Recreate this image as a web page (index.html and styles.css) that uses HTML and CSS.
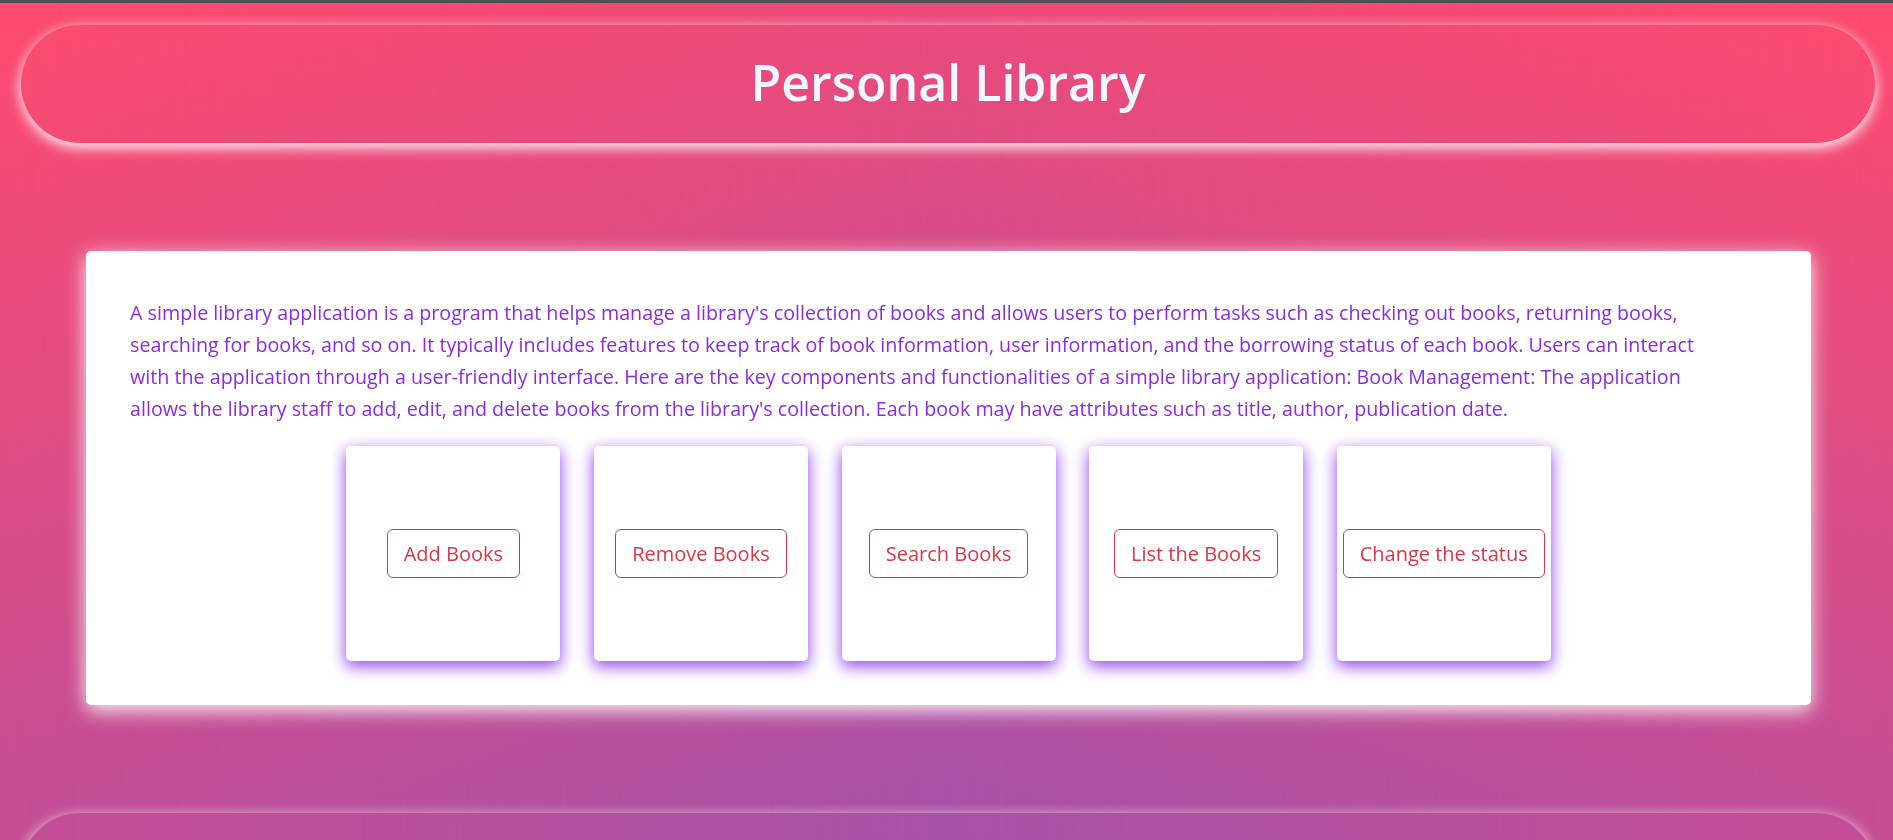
FILE: index.html
```html
<!DOCTYPE html>
<html lang="en">
<head>
<meta charset="utf-8">
<title>Personal Library</title>
<link rel="stylesheet" href="styles.css">
</head>
<body>
  <header class="site-header">
    <h1 class="site-title">Personal Library</h1>
  </header>

  <main class="intro-card">
    <p class="intro-text">A simple library application is a program that helps manage a library's collection of books and allows users to perform tasks such as checking out books, returning books, searching for books, and so on. It typically includes features to keep track of book information, user information, and the borrowing status of each book. Users can interact with the application through a user-friendly interface. Here are the key components and functionalities of a simple library application: Book Management: The application allows the library staff to add, edit, and delete books from the library's collection. Each book may have attributes such as title, author, publication date.</p>
    <div class="actions">
      <div class="action-tile"><button class="action-btn" type="button">Add Books</button></div>
      <div class="action-tile"><button class="action-btn" type="button">Remove Books</button></div>
      <div class="action-tile"><button class="action-btn" type="button">Search Books</button></div>
      <div class="action-tile"><button class="action-btn" type="button">List the Books</button></div>
      <div class="action-tile"><button class="action-btn" type="button">Change the status</button></div>
    </div>
  </main>

  <footer class="site-footer"></footer>
</body>
</html>
```

FILE: styles.css
```css
html {
  overflow: hidden;
}

body {
  margin: 0;
  border-top: 3px solid #4c5153;
  min-height: 837px;
  font-family: "Segoe UI", "Open Sans", Lato, sans-serif;
  font-size: 19.7px;
  line-height: 32px;
  background: linear-gradient(to bottom, #ec4a7b 0px, #a952a7 800px, #a353aa 1000px);
  background-repeat: no-repeat;
  background-color: #a353aa;
}

body::before {
  content: "";
  position: fixed;
  inset: 0;
  z-index: -1;
  background: linear-gradient(to bottom, #ff4a6e 0px, #c54e94 800px);
  -webkit-mask-image: linear-gradient(to right, #000 0%, rgba(0, 0, 0, 0) 50%, #000 100%);
  mask-image: linear-gradient(to right, #000 0%, rgba(0, 0, 0, 0) 50%, #000 100%);
}

.site-header,
.site-footer {
  height: 118px;
  margin: 22px 18px 0 21px;
  border-radius: 59px;
  box-shadow: 0 4px 14px rgba(255, 255, 255, 1);
  display: flex;
  align-items: center;
  justify-content: center;
}

.site-footer {
  margin-top: 108px;
}

.site-title {
  margin: 0;
  padding-bottom: 4px;
  color: aliceblue;
  font-family: "Segoe UI", "Open Sans", Lato, sans-serif;
  font-weight: 600;
  font-size: 50px;
  line-height: 1.2;
}

.intro-card {
  display: block;
  margin: 108px 82px 0 86px;
  padding: 46px 44px 44px;
  background: #fff;
  border-radius: 5px;
  box-shadow: 0 5px 20px rgba(255, 255, 255, 0.95);
}

.intro-text {
  max-width: 1596px;
  margin: 0 0 21px;
  color: #8a2be2;
}

.actions {
  display: flex;
  justify-content: center;
  gap: 33.6px;
}

.action-tile {
  width: 214px;
  height: 215px;
  display: flex;
  align-items: center;
  justify-content: center;
  background: #fff;
  border-radius: 5px;
  box-shadow: 0 5px 15px 1px rgba(150, 70, 240, 0.95);
}

.action-btn {
  font-family: inherit;
  font-size: 20px;
  line-height: 32px;
  padding: 7.5px 16px;
  color: #dc3545;
  background: transparent;
  border: 1px solid #dc3545;
  border-radius: 6px;
  white-space: nowrap;
  cursor: pointer;
}
```
